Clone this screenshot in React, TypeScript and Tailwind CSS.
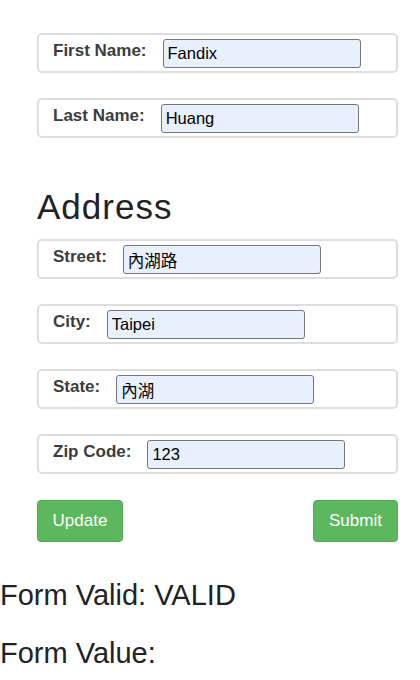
const nameFields = [
  { label: "First Name:", value: "Fandix" },
  { label: "Last Name:", value: "Huang" },
];

const addressFields = [
  { label: "Street:", value: "內湖路" },
  { label: "City:", value: "Taipei" },
  { label: "State:", value: "內湖" },
  { label: "Zip Code:", value: "123" },
];

function FieldBox({ label, value, first }: { label: string; value: string; first?: boolean }) {
  return (
    <div
      className={`flex h-[40px] items-center rounded-[5px] border-2 border-[#dedede] pl-[14px] ${
        first ? "" : "mt-[25px]"
      }`}
    >
      <label className="mb-[5px] text-[17px] font-bold text-[#3c3c3c]">{label}</label>
      <input
        readOnly
        value={value}
        className="ml-[16px] mt-[1px] h-[29px] w-[198px] rounded-[3px] border border-[#767676] bg-[#e8f0fe] px-[4px] text-[16.5px] text-black outline-none"
      />
    </div>
  );
}

export default function App() {
  return (
    <div className="h-[680px] w-[420px] overflow-hidden bg-white font-['Liberation_Sans','Noto_Sans_CJK_TC',Arial,sans-serif] text-[#333]">
      <div className="pl-[37px] pr-[22px] pt-[33px]">
        {nameFields.map((f, i) => (
          <FieldBox key={f.label} label={f.label} value={f.value} first={i === 0} />
        ))}

        <h1 className="mb-[15px] mt-[51px] text-[35px] leading-[35px] tracking-[1px] text-[#222]">
          Address
        </h1>
        {addressFields.map((f, i) => (
          <FieldBox key={f.label} label={f.label} value={f.value} first={i === 0} />
        ))}

        <div className="mt-[26px] flex justify-between">
          <button className="h-[42px] w-[86px] rounded-[4px] border border-[#4cae4c] bg-[#5cb85c] text-[17px] text-white">
            Update
          </button>
          <button className="h-[42px] w-[85px] rounded-[4px] border border-[#4cae4c] bg-[#5cb85c] text-[17px] text-white">
            Submit
          </button>
        </div>
      </div>

      <h3 className="mt-[39px] text-[29px] leading-[29px] text-[#222]">Form Valid: VALID</h3>
      <h3 className="mt-[29px] text-[29px] leading-[29px] text-[#222]">Form Value:</h3>
    </div>
  );
}
